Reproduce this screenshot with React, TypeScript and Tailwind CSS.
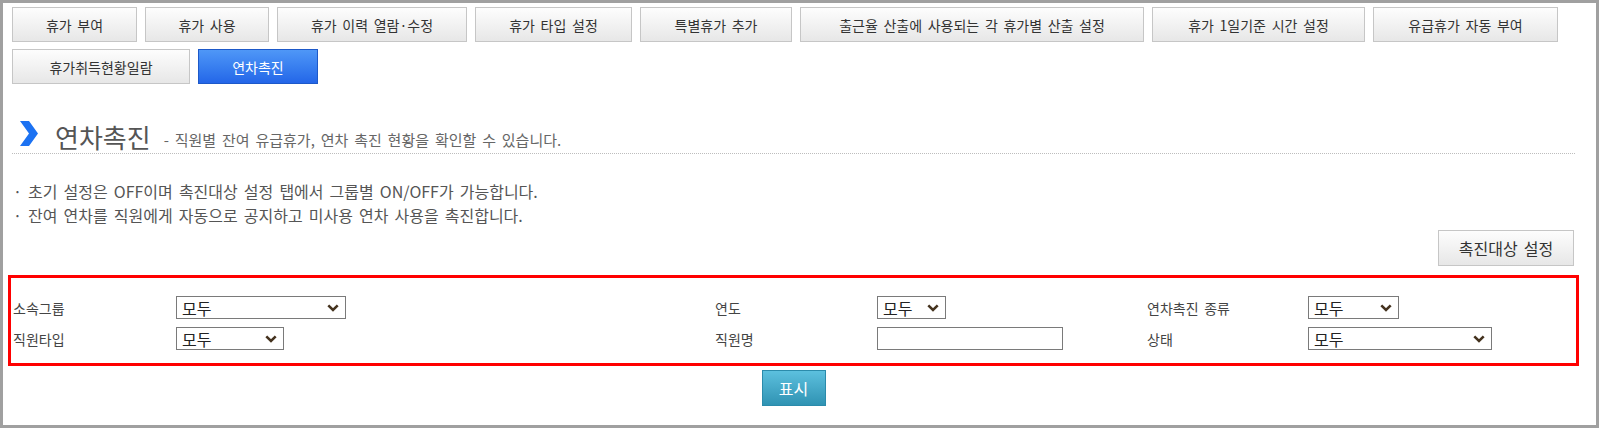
import React from "react";

const FONT = { fontFamily: '"Noto Sans CJK KR", "Noto Sans", sans-serif' };

const tabsTop = [
  { label: "휴가 부여", w: "w-[125px]" },
  { label: "휴가 사용", w: "w-[124px]" },
  { label: "휴가 이력 열람·수정", w: "w-[190px]" },
  { label: "휴가 타입 설정", w: "w-[157px]" },
  { label: "특별휴가 추가", w: "w-[152px]" },
  { label: "출근율 산출에 사용되는 각 휴가별 산출 설정", w: "w-[344px]" },
  { label: "휴가 1일기준 시간 설정", w: "w-[213px]" },
  { label: "유급휴가 자동 부여", w: "w-[185px]" },
];

function TabButton({ label, w, active }: { label: string; w: string; active?: boolean }) {
  const base =
    "h-[35px] flex items-center justify-center text-[14px] leading-none border [word-spacing:2.5px]";
  const look = active
    ? "bg-gradient-to-b from-[#4f97f7] to-[#2466e8] border-[#1d59c9] text-white"
    : "bg-gradient-to-b from-[#fdfdfd] to-[#e7e7e7] border-[#c6c6c6] text-[#333]";
  return <button className={`${w} ${base} ${look}`}>{label}</button>;
}

function Chevron() {
  return (
    <svg width="18" height="25" viewBox="0 0 18 25" className="mb-[4px] shrink-0">
      <polygon points="0,0 9,0 18,12.5 9,25 0,25 9,12.5" fill="#1c72f2" />
    </svg>
  );
}

function FakeSelect({ w }: { w: string }) {
  return (
    <div
      className={`${w} h-[23px] border border-[#7a7a7a] bg-white flex items-center justify-between pl-[5px] pr-[6px] text-[16px] leading-none text-[#222]`}
    >
      <span>모두</span>
      <svg width="12" height="8" viewBox="0 0 12 8">
        <path d="M1.3 1.4 L6 6 L10.7 1.4" fill="none" stroke="#45331f" strokeWidth="2.6" />
      </svg>
    </div>
  );
}

function Label({ children }: { children: React.ReactNode }) {
  return <div className="text-[14px] leading-none text-[#444]">{children}</div>;
}

export default function App() {
  return (
    <div
      style={FONT}
      className="w-[1599px] h-[428px] border-[3px] border-[#a0a0a0] bg-white [word-spacing:2.5px]"
    >
      {/* tab buttons */}
      <div className="pt-[4px] pl-[9px]">
        <div className="flex gap-x-2">
          {tabsTop.map((t) => (
            <TabButton key={t.label} label={t.label} w={t.w} />
          ))}
        </div>
        <div className="flex gap-x-2 mt-[7px]">
          <TabButton label="휴가취득현황일람" w="w-[178px]" />
          <TabButton label="연차촉진" w="w-[120px]" active />
        </div>
      </div>

      {/* title */}
      <div className="mt-[37px] ml-[9px] mr-[21px] flex items-end border-b border-dotted border-[#bdbdbd] pb-[3px] pl-[8px]">
        <Chevron />
        <span className="ml-[17px] text-[26px] leading-none text-[#555]">연차촉진</span>
        <span className="ml-[13px] mb-[3px] text-[15px] leading-none text-[#666]">
          - 직원별 잔여 유급휴가, 연차 촉진 현황을 확인할 수 있습니다.
        </span>
      </div>

      {/* notes */}
      <div className="mt-[25px] ml-[10px] text-[16px] leading-[24px] text-[#555]">
        <p>· 초기 설정은 OFF이며 촉진대상 설정 탭에서 그룹별 ON/OFF가 가능합니다.</p>
        <p>· 잔여 연차를 직원에게 자동으로 공지하고 미사용 연차 사용을 촉진합니다.</p>
      </div>

      <div className="mt-[3px] mr-[22px] flex justify-end">
        <button className="w-[136px] h-[36px] flex items-center justify-center border border-[#c6c6c6] bg-gradient-to-b from-[#fdfdfd] to-[#e7e7e7] text-[16px] leading-none text-[#333] [word-spacing:2.5px]">
          촉진대상 설정
        </button>
      </div>

      {/* search filters */}
      <div className="mt-[9px] ml-[5px] mr-[17px] h-[91px] border-[3px] border-[#ff0000] pt-[18px] pl-[2px]">
        <div className="grid grid-cols-[163px_539px_162px_270px_161px_1fr] gap-y-[8px] items-center">
          <Label>소속그룹</Label>
          <FakeSelect w="w-[170px]" />
          <Label>연도</Label>
          <FakeSelect w="w-[69px]" />
          <Label>연차촉진 종류</Label>
          <FakeSelect w="w-[91px]" />

          <Label>직원타입</Label>
          <FakeSelect w="w-[108px]" />
          <Label>직원명</Label>
          <input className="w-[186px] h-[23px] border border-[#7a7a7a] bg-white outline-none" />
          <Label>상태</Label>
          <FakeSelect w="w-[184px]" />
        </div>
      </div>

      <div className="mt-[4px] ml-[5px] mr-[17px] flex justify-center">
        <button className="w-[64px] h-[36px] flex items-center justify-center border border-[#2b8bab] bg-gradient-to-b from-[#5cc0de] to-[#2f93b3] text-[16px] leading-none text-white">
          표시
        </button>
      </div>
    </div>
  );
}
